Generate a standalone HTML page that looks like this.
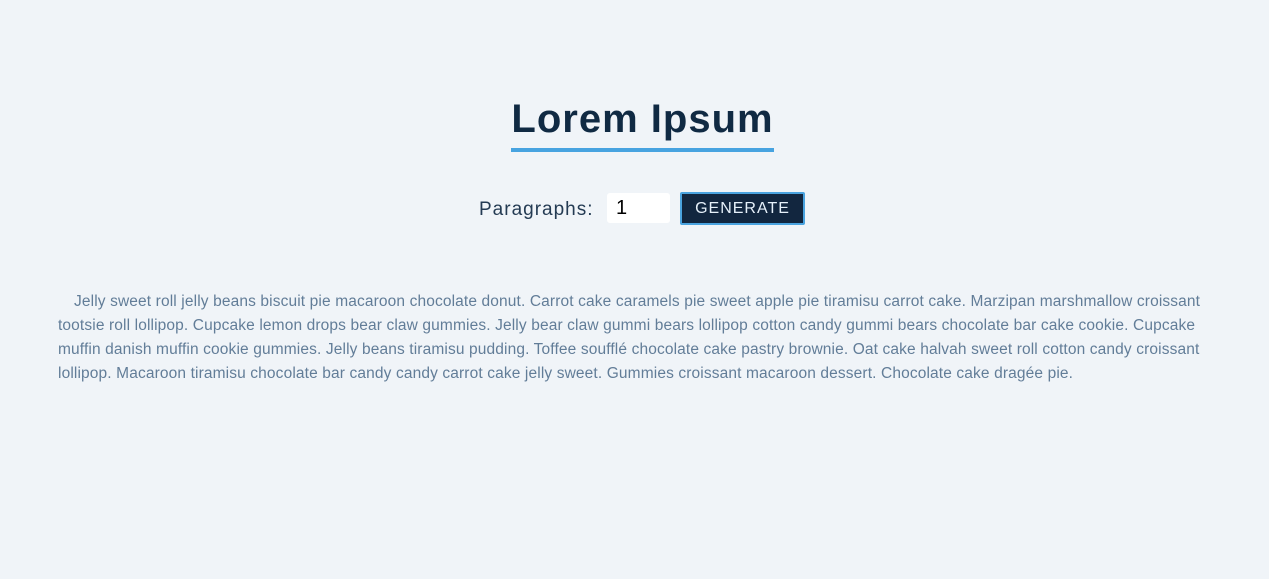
<!DOCTYPE html>
<html><head><meta charset="utf-8"><style>
html,body{margin:0;background:#f0f4f8;width:1269px;height:579px;overflow:hidden;font-family:"Liberation Sans",sans-serif}
h1{position:absolute;left:511px;top:96px;width:263px;margin:0;text-align:center;font-size:40px;font-weight:bold;color:#102a43;letter-spacing:1px;line-height:46px;border-bottom:4px solid #47a3e0;padding-bottom:6px}
.lbl{position:absolute;left:479px;top:199px;font-size:19px;color:#243b53;letter-spacing:1px}
.inp{position:absolute;left:607px;top:193px;width:63px;height:30px;background:#fff;border-radius:3px;font-size:20px;line-height:30px;text-indent:9px;color:#000}
.btn{position:absolute;left:680px;top:192px;background:#12263f;border:2px solid #4aa3df;border-radius:2px;color:#e6f0fa;font-size:16px;letter-spacing:1px;text-align:center;line-height:29px;width:121px;height:29px}
p{position:absolute;left:58px;top:290px;width:1180px;margin:0;font-size:15.5px;letter-spacing:0.13px;line-height:24px;color:#627d98;white-space:nowrap;text-indent:16px}
</style></head><body>
<h1>Lorem Ipsum</h1>
<div class="lbl">Paragraphs:</div>
<div class="inp">1</div>
<div class="btn">GENERATE</div>
<p>Jelly sweet roll jelly beans biscuit pie macaroon chocolate donut. Carrot cake caramels pie sweet apple pie tiramisu carrot cake. Marzipan marshmallow croissant<br>tootsie roll lollipop. Cupcake lemon drops bear claw gummies. Jelly bear claw gummi bears lollipop cotton candy gummi bears chocolate bar cake cookie. Cupcake<br>muffin danish muffin cookie gummies. Jelly beans tiramisu pudding. Toffee soufflé chocolate cake pastry brownie. Oat cake halvah sweet roll cotton candy croissant<br>lollipop. Macaroon tiramisu chocolate bar candy candy carrot cake jelly sweet. Gummies croissant macaroon dessert. Chocolate cake dragée pie.</p>
</body></html>
